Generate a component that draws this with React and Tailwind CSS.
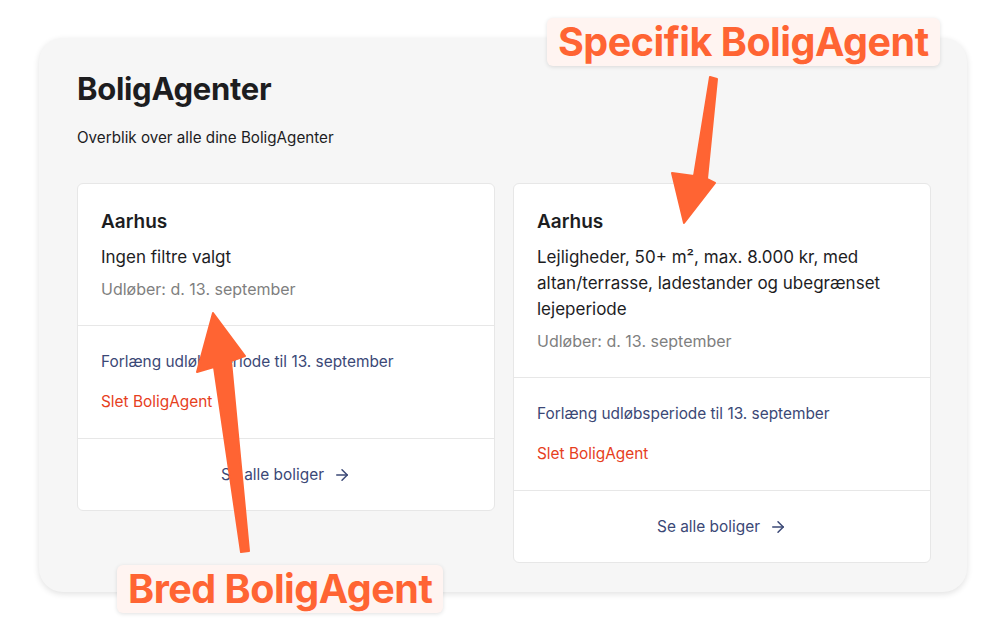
import React from 'react';
import { ArrowRight } from 'lucide-react';

const agents = [
    {
        id: 1,
        city: 'Aarhus',
        filters: 'Ingen filtre valgt',
        expires: 'd. 13. september',
    },
    {
        id: 2,
        city: 'Aarhus',
        filters: 'Lejligheder, 50+ m², max. 8.000 kr, med altan/terrasse, ladestander og ubegrænset lejeperiode',
        expires: 'd. 13. september',
    },
];

const AgentCard = ({ agent }) => (
    <div className="bg-white rounded-[6px] border border-[#e7e7e7]">
        <div className="px-[23px] pt-6 pb-6">
            <h2 className="text-[19px] leading-[28px] font-semibold text-[#1d1d1f]">{agent.city}</h2>
            <p className="mt-2 text-[17px] leading-[26px] text-[#1d1d1f]">{agent.filters}</p>
            <p className="mt-[7px] text-[16px] leading-[24px] text-[#7f7f7f]">Udløber: {agent.expires}</p>
        </div>

        <div className="border-t border-[#e7e7e7] px-[23px] pt-6 pb-6 flex flex-col gap-4 items-start">
            <button className="text-[15.4px] leading-[24px] text-[#3b4876]">
                Forlæng udløbsperiode til 13. september
            </button>
            <button className="text-[15.4px] leading-[24px] text-[#e6401d]">Slet BoligAgent</button>
        </div>

        <div className="border-t border-[#e7e7e7] pt-6 pb-[23px] flex justify-center">
            <a className="flex items-center gap-[9px] text-[15.4px] leading-[24px] text-[#3b4876]">
                Se alle boliger
                <ArrowRight size={18} strokeWidth={2} />
            </a>
        </div>
    </div>
);

const Label = ({ children, className }) => (
    <div
        className={`absolute bg-[#fff4f1] rounded-[6px] shadow-[0_1px_4px_rgba(0,0,0,0.12)] text-[#ff6433] font-bold text-[39.5px] leading-[48px] px-[11px] tracking-[-0.5px] ${className}`}
    >
        {children}
    </div>
);

const App = () => {
    return (
        <div className="relative w-[1006px] h-[630px] bg-white overflow-hidden" style={{ fontFamily: 'Inter, "Noto Sans", sans-serif' }}>
            <div className="pt-[38px] pl-[39px]">
                <div className="w-[928px] bg-[#f6f6f6] rounded-[24px] shadow-[0_2px_6px_rgba(0,0,0,0.12)] pl-[38px] pr-[36px] pt-[31px] pb-[29px]">
                    <h1 className="text-[31px] leading-[40px] font-bold text-[#1d1d1f] tracking-[-0.3px]">BoligAgenter</h1>
                    <p className="mt-[17px] text-[15.2px] leading-[24px] text-[#1d1d1f]">Overblik over alle dine BoligAgenter</p>

                    <div className="mt-[33px] grid grid-cols-2 gap-[18px] items-start">
                        {agents.map((agent) => (
                            <AgentCard key={agent.id} agent={agent} />
                        ))}
                    </div>
                </div>
            </div>

            {/* annotations */}
            <svg className="absolute inset-0 pointer-events-none" width="1006" height="630" viewBox="0 0 1006 630">
                <polygon
                    points="710,77 717,79 707,179 715,183 684,223 672,173 694,176"
                    fill="#ff6433"
                    stroke="#ff6433"
                    strokeWidth="2"
                    strokeLinejoin="round"
                />
                <polygon
                    points="213,313 245,356 231,361 249,551 241,552 214,367 197,372"
                    fill="#ff6433"
                    stroke="#ff6433"
                    strokeWidth="2"
                    strokeLinejoin="round"
                />
            </svg>
            <Label className="left-[547px] top-[18px]">Specifik BoligAgent</Label>
            <Label className="left-[117px] top-[565px]">Bred BoligAgent</Label>
        </div>
    );
};

export default App;
